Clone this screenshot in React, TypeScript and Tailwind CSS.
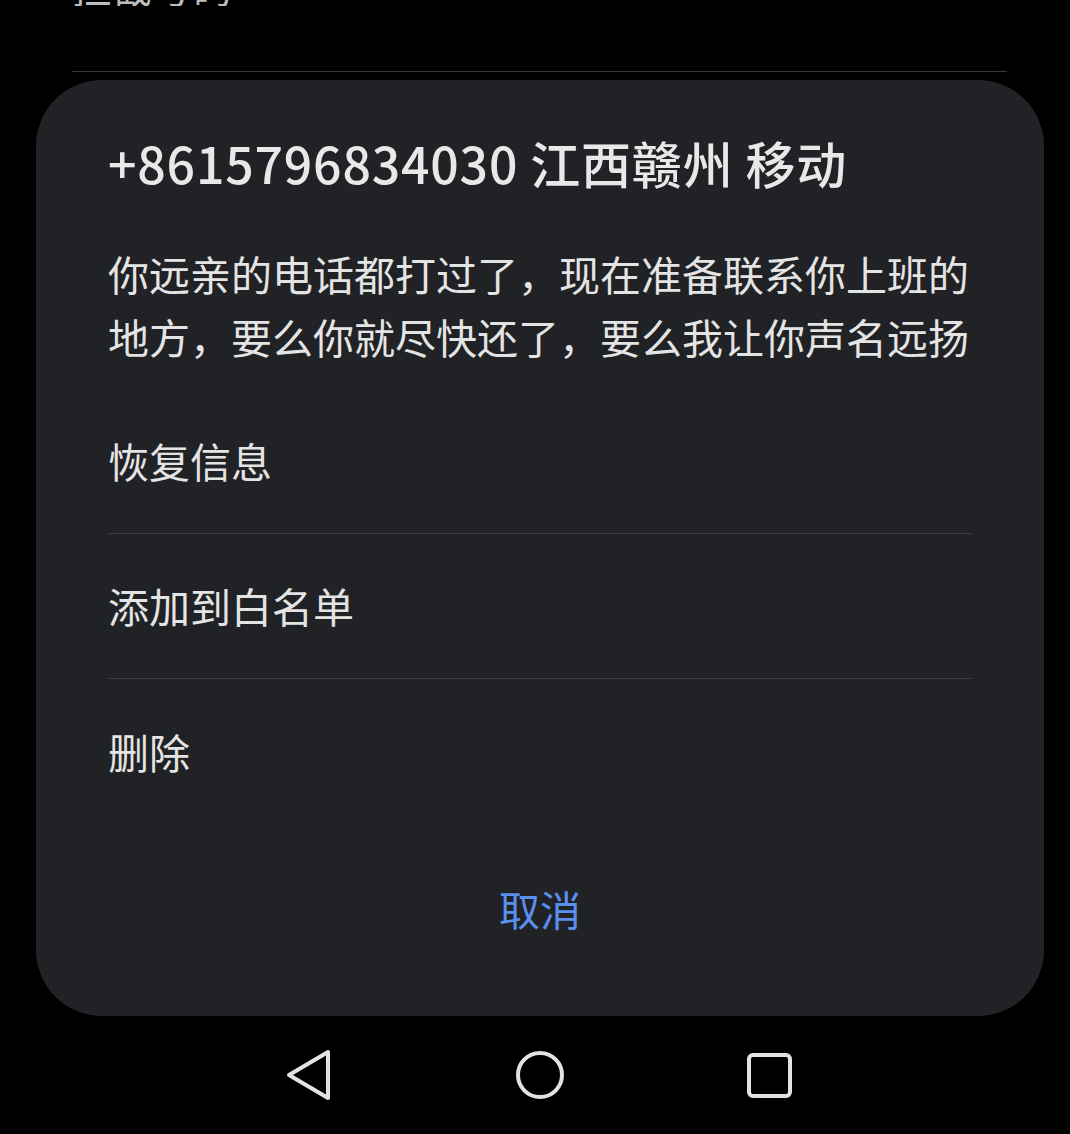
import React from "react";

const font = { fontFamily: '"Noto Sans CJK SC", "Noto Sans", sans-serif' };

function NavBar() {
  return (
    <div className="flex-1 flex items-center justify-center">
      <div className="relative w-[1070px] h-full">
        <svg className="absolute left-[280px] top-[28px]" width="56" height="62" viewBox="0 0 56 62">
          <path d="M9 31 L48 8 L48 54 Z" fill="none" stroke="#e2e2e2" strokeWidth="4" strokeLinejoin="round" />
        </svg>
        <svg className="absolute left-[512px] top-[31px]" width="56" height="56" viewBox="0 0 56 56">
          <circle cx="28" cy="28" r="22" fill="none" stroke="#e2e2e2" strokeWidth="4" />
        </svg>
        <svg className="absolute left-[742px] top-[33px]" width="56" height="54" viewBox="0 0 56 54">
          <rect x="7" y="6" width="41" height="41" rx="4" fill="none" stroke="#e2e2e2" strokeWidth="4" />
        </svg>
      </div>
    </div>
  );
}

export default function App() {
  const items = ["恢复信息", "添加到白名单", "删除"];
  return (
    <div className="w-[1070px] h-[1134px] bg-black flex flex-col overflow-hidden" style={font}>
      <div className="h-[6px] overflow-hidden px-[72px]">
        <div className="-mt-[34px] text-[40px] leading-[40px] text-[#bdbdbd]">拦截号码</div>
      </div>
      <div className="mt-[65px] ml-[72px] w-[935px] h-px bg-[#38393c]" />
      <div className="mt-[8px] ml-[36px] w-[1008px] h-[936px] rounded-[66px] bg-[#212225] px-[72px] pt-[47px] flex flex-col">
        <div className="text-[50px] leading-[70px] font-medium text-[#e8e8e8] tracking-[0.8px] whitespace-nowrap">
          +8615796834030 江西赣州 移动
        </div>
        <div className="mt-[45px] text-[41px] leading-[63px] text-[#e4e4e4] whitespace-nowrap">
          你远亲的电话都打过了，现在准备联系你上班的
          <br />
          地方，要么你就尽快还了，要么我让你声名远扬
        </div>
        <div className="mt-[21px] flex flex-col">
          {items.map((t, i) => (
            <div
              key={t}
              className={
                i < items.length - 1
                  ? "h-[145px] flex items-center border-b border-[#3c3d40] text-[41px] text-[#e4e4e4]"
                  : "h-[145px] flex items-center text-[41px] text-[#e4e4e4]"
              }
            >
              {t}
            </div>
          ))}
        </div>
        <div className="mt-[59px] h-[50px] leading-[50px] text-center text-[41px] text-[#5a8fee]">取消</div>
      </div>
      <NavBar />
    </div>
  );
}
